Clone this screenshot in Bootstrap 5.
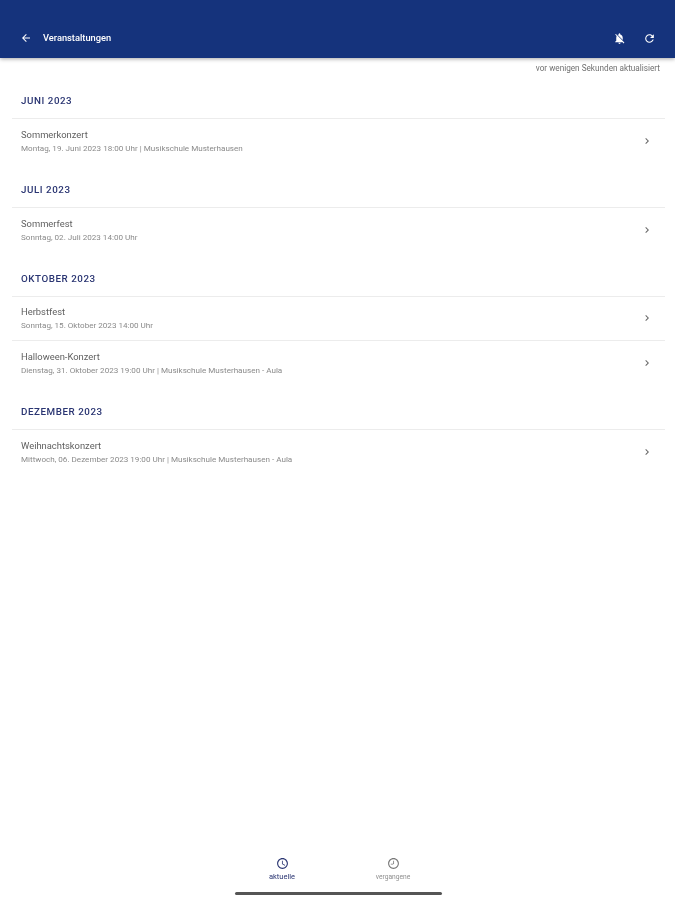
<!DOCTYPE html>
<html lang="de">
<head>
<meta charset="utf-8">
<title>Veranstaltungen</title>
<link rel="stylesheet" href="https://cdn.jsdelivr.net/npm/bootstrap@5.3.0/dist/css/bootstrap.min.css">
<style>
html,body{height:100%}
body{font-family:Roboto,"Liberation Sans",sans-serif;background:#fff;overflow:hidden}
.app-shell{height:900px;filter:blur(.5px)}
.top-bar{height:58px;background:#15337c;padding:18px 19px 0 20px;box-shadow:0 1px 4px rgba(0,0,0,.35);color:#fff}
.top-title{font-size:9.3px;font-weight:500;margin-left:11px}
.top-actions{gap:17px}
.updated-line{font-size:8.2px;color:#707070;text-align:right;padding:5px 15px 0 0;height:24px;line-height:10px}
.event-scroll{padding:0 10px 0 12px}
.month-head{font-size:9.8px;font-weight:500;letter-spacing:.55px;color:#2a3572;padding-left:9px;line-height:12px;height:37px;padding-top:13px;border-bottom:1px solid #ececec}
.month-head.later{height:44.8px;padding-top:21px}
.event-row{height:44.1px;padding:0 12px 0 9px;border-bottom:1px solid #ececec}
.event-row:last-child{border-bottom:0}
.event-name{font-size:9.4px;color:#5f5f5f;line-height:12px}
.event-meta{font-size:8.1px;color:#8a8a8a;line-height:10px;margin-top:2px}
.bottom-nav{height:62px;position:relative}
.nav-slot{width:111px;line-height:8px;padding-top:19px}
.nav-slot.on{color:#2a3572;font-size:7.5px}
.nav-slot.off{color:#8f8f8f;font-size:6.7px}
.nav-slot svg{display:block;margin:0 auto 3px}
.home-pill{width:207px;height:3px;background:#555;border-radius:2px;position:absolute;left:235px;bottom:5px}
</style>
</head>
<body>
<div class="app-shell d-flex flex-column">
  <header class="top-bar d-flex align-items-center justify-content-between">
    <div class="d-flex align-items-center">
      <svg width="12" height="12" viewBox="0 0 24 24" fill="#fff"><path d="M20 11H7.83l5.59-5.59L12 4l-8 8 8 8 1.41-1.41L7.83 13H20z"/></svg>
      <span class="top-title">Veranstaltungen</span>
    </div>
    <div class="d-flex align-items-center top-actions">
      <svg width="13" height="13" viewBox="0 0 24 24" fill="#fff"><path d="M20 18.69 7.84 6.14 5.27 3.49 4 4.76l2.8 2.8v.01C6.29 8.54 6 9.68 6 11v5l-2 2v1h13.73l2 2L21 19.73l-1-1.04zM12 22c1.11 0 2-.89 2-2h-4c0 1.11.89 2 2 2zm6-7.32V11c0-3.08-1.64-5.64-4.5-6.32V4c0-.83-.67-1.5-1.5-1.5s-1.5.67-1.5 1.5v.68c-.15.03-.29.08-.42.12-.1.03-.2.07-.3.11h-.01c-.2.08-.4.17-.59.27-.1.04-.19.1-.28.15L18 14.68z"/></svg>
      <svg width="13" height="13" viewBox="0 0 24 24" fill="#fff"><path d="M17.65 6.35C16.2 4.9 14.21 4 12 4c-4.42 0-7.99 3.58-7.99 8s3.57 8 7.99 8c3.73 0 6.84-2.55 7.73-6h-2.08c-.82 2.33-3.04 4-5.65 4-3.31 0-6-2.69-6-6s2.69-6 6-6c1.66 0 3.14.69 4.22 1.78L13 11h7V4l-2.35 2.35z"/></svg>
    </div>
  </header>
  <div class="updated-line">vor wenigen Sekunden aktualisiert</div>
  <main class="event-scroll flex-grow-1">
    <section>
      <div class="month-head">JUNI 2023</div>
      <div class="event-row d-flex align-items-center justify-content-between">
        <div><div class="event-name">Sommerkonzert</div><div class="event-meta">Montag, 19. Juni 2023 18:00 Uhr | Musikschule Musterhausen</div></div>
        <svg width="12" height="12" viewBox="0 0 24 24" fill="#666"><path d="M10 6 8.59 7.41 13.17 12l-4.58 4.59L10 18l6-6z"/></svg>
      </div>
    </section>
    <section>
      <div class="month-head later">JULI 2023</div>
      <div class="event-row d-flex align-items-center justify-content-between">
        <div><div class="event-name">Sommerfest</div><div class="event-meta">Sonntag, 02. Juli 2023 14:00 Uhr</div></div>
        <svg width="12" height="12" viewBox="0 0 24 24" fill="#666"><path d="M10 6 8.59 7.41 13.17 12l-4.58 4.59L10 18l6-6z"/></svg>
      </div>
    </section>
    <section>
      <div class="month-head later">OKTOBER 2023</div>
      <div class="event-row d-flex align-items-center justify-content-between">
        <div><div class="event-name">Herbstfest</div><div class="event-meta">Sonntag, 15. Oktober 2023 14:00 Uhr</div></div>
        <svg width="12" height="12" viewBox="0 0 24 24" fill="#666"><path d="M10 6 8.59 7.41 13.17 12l-4.58 4.59L10 18l6-6z"/></svg>
      </div>
      <div class="event-row d-flex align-items-center justify-content-between">
        <div><div class="event-name">Halloween-Konzert</div><div class="event-meta">Dienstag, 31. Oktober 2023 19:00 Uhr | Musikschule Musterhausen - Aula</div></div>
        <svg width="12" height="12" viewBox="0 0 24 24" fill="#666"><path d="M10 6 8.59 7.41 13.17 12l-4.58 4.59L10 18l6-6z"/></svg>
      </div>
    </section>
    <section>
      <div class="month-head later">DEZEMBER 2023</div>
      <div class="event-row d-flex align-items-center justify-content-between">
        <div><div class="event-name">Weihnachtskonzert</div><div class="event-meta">Mittwoch, 06. Dezember 2023 19:00 Uhr | Musikschule Musterhausen - Aula</div></div>
        <svg width="12" height="12" viewBox="0 0 24 24" fill="#666"><path d="M10 6 8.59 7.41 13.17 12l-4.58 4.59L10 18l6-6z"/></svg>
      </div>
    </section>
  </main>
  <nav class="bottom-nav d-flex justify-content-center">
    <div class="nav-slot on text-center">
      <svg width="13" height="13" viewBox="0 0 24 24" fill="#2a3572"><path d="M11.99 2C6.47 2 2 6.48 2 12s4.47 10 9.99 10C17.52 22 22 17.52 22 12S17.52 2 11.99 2zM12 20c-4.42 0-8-3.58-8-8s3.58-8 8-8 8 3.58 8 8-3.58 8-8 8zm.5-13H11v6l5.25 3.15.75-1.23-4.5-2.67z"/></svg>
      aktuelle
    </div>
    <div class="nav-slot off text-center">
      <svg width="13" height="13" viewBox="0 0 24 24" fill="#777"><path d="M12 2C6.48 2 2 6.48 2 12s4.48 10 10 10 10-4.48 10-10S17.52 2 12 2zm0 18c-4.42 0-8-3.58-8-8s3.58-8 8-8 8 3.58 8 8-3.58 8-8 8zm-.5-13H13v6h-1.5zM7 12.5h4.5V14H7z"/></svg>
      vergangene
    </div>
    <div class="home-pill"></div>
  </nav>
</div>
<script src="https://cdn.jsdelivr.net/npm/bootstrap@5.3.0/dist/js/bootstrap.bundle.min.js"></script>
</body>
</html>
